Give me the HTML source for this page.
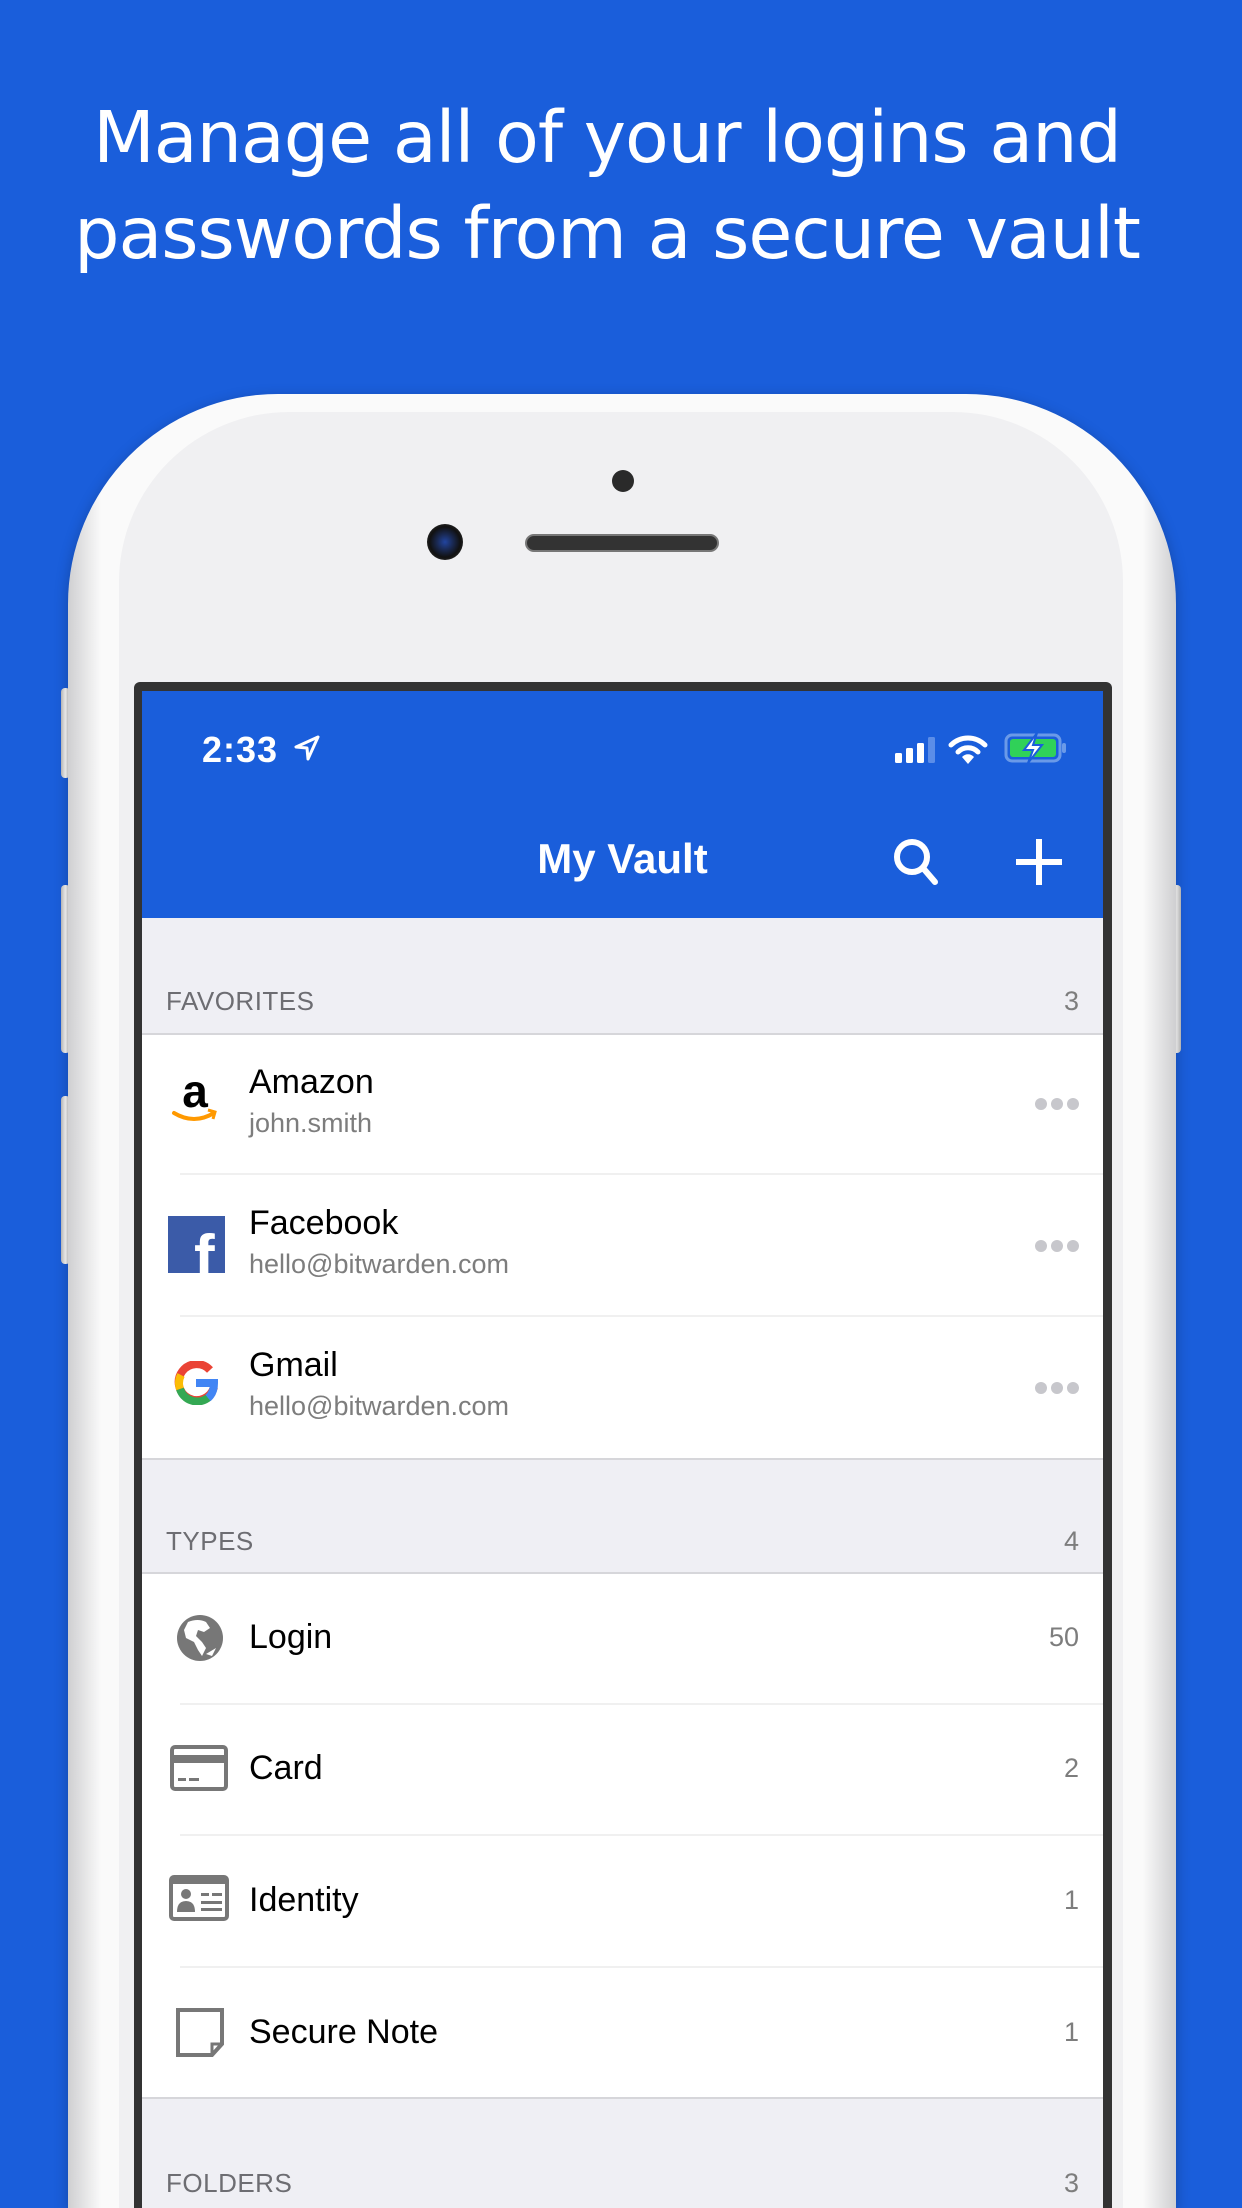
<!DOCTYPE html>
<html><head><meta charset="utf-8"><style>
*{margin:0;padding:0;box-sizing:border-box}
html,body{width:1242px;height:2208px;overflow:hidden}
body{background:#1a5edb;font-family:"Liberation Sans",sans-serif}
#wrap{position:relative;width:1242px;height:2208px;overflow:hidden;background:#1a5edb}
.abs{position:absolute}
.head{left:-14px;width:1242px;text-align:center;color:#fff;font-family:"DejaVu Sans","Liberation Sans",sans-serif;font-size:71.5px;letter-spacing:-1px;line-height:96px;top:90px}
.phone{left:68px;top:394px;width:1108px;height:1814px;border-radius:210px 210px 0 0;background:linear-gradient(90deg,#cfcfd1 0,#fafafa 3%,#fafafa 97%,#cfcfd1 100%);box-shadow:0 4px 14px rgba(0,0,0,.25)}
.face{left:119px;top:412px;width:1004px;height:1796px;border-radius:170px 170px 0 0;background:#f0f0f2}
.btn{background:linear-gradient(90deg,#bbb,#fff,#bbb);border-radius:4px;width:9px}
.screen{left:134px;top:682px;width:978px;height:1526px;background:#333;border-radius:6px 6px 0 0}
.sc{left:142px;top:691px;width:961px;height:1517px;background:#fff;overflow:hidden}
.nav{left:0;top:0;width:961px;height:227px;background:#1a5edb}
.t{color:#000;font-size:34px}
.s{color:#7d7d7d;font-size:27px}
.hdr{color:#6d6d72;font-size:26px;letter-spacing:.5px}
.gray{background:#efeff4;left:0;width:961px}
.line{left:0;width:961px;height:2px;background:#d6d6da}
.sep{left:38px;width:923px;height:2px;background:#f0f0f0}
.dots{left:893px;width:50px;height:12px;display:flex;gap:4px}
.dots i{display:block;width:12px;height:12px;border-radius:6px;background:#c7c7cc}
.cnt{color:#7d7d7d;font-size:27px;right:24px;text-align:right}
</style></head><body><div id="wrap">
<div class="abs head">Manage all of your logins and<br>passwords from a secure vault</div>
<div class="abs btn" style="left:61px;top:688px;height:90px"></div>
<div class="abs btn" style="left:61px;top:885px;height:168px"></div>
<div class="abs btn" style="left:61px;top:1096px;height:168px"></div>
<div class="abs btn" style="left:1172px;top:885px;height:168px"></div>
<div class="abs phone"></div>
<div class="abs face"></div>
<div class="abs" style="left:612px;top:470px;width:22px;height:22px;border-radius:50%;background:#2a2a2a"></div>
<div class="abs" style="left:427px;top:524px;width:36px;height:36px;border-radius:50%;background:radial-gradient(circle,#2245a0 0,#1a2a55 30%,#111 60%,#444 100%)"></div>
<div class="abs" style="left:525px;top:534px;width:194px;height:18px;border-radius:9px;background:#333;border:2px solid #777"></div>
<div class="abs screen"></div>
<div class="abs sc">
 <div class="abs nav">
  <div class="abs" style="left:60px;top:38px;color:#fff;font-size:36px;font-weight:bold;letter-spacing:1px">2:33</div>
  <svg class="abs" style="left:152px;top:44px" width="26" height="26" viewBox="0 0 26 26"><path d="M24 2 L2 12 L13 13 L14 24 Z" fill="none" stroke="#fff" stroke-width="3" stroke-linejoin="round"/></svg>
  <svg class="abs" style="left:752px;top:46px" width="44" height="26"><rect x="1" y="16" width="7" height="10" rx="1.5" fill="#fff"/><rect x="12" y="11" width="7" height="15" rx="1.5" fill="#fff"/><rect x="23" y="6" width="7" height="20" rx="1.5" fill="#fff"/><rect x="34" y="0" width="7" height="26" rx="1.5" fill="#5b8de8"/></svg>
  <svg class="abs" style="left:806px;top:42px" width="40" height="32" viewBox="0 0 40 32"><path d="M3 12 A24 24 0 0 1 37 12" fill="none" stroke="#fff" stroke-width="5" stroke-linecap="round"/><path d="M10 19 A14 14 0 0 1 30 19" fill="none" stroke="#fff" stroke-width="5" stroke-linecap="round"/><path d="M20 31 L14 24 A8 8 0 0 1 26 24 Z" fill="#fff"/></svg>
  <svg class="abs" style="left:862px;top:42px" width="64" height="30"><rect x="2" y="2" width="54" height="26" rx="6" fill="none" stroke="#6a9ae8" stroke-width="3"/><rect x="6" y="6" width="46" height="18" rx="3" fill="#30d158"/><rect x="58" y="10" width="4" height="10" rx="2" fill="#6a9ae8"/><path d="M33 0 L20 17 L29 17 L24 30 L38 12 L29 12 Z" fill="#fff" stroke="#1a5edb" stroke-width="2"/></svg>
  <div class="abs" style="left:0;width:961px;text-align:center;top:144px;color:#fff;font-size:42px;font-weight:bold">My Vault</div>
  <svg class="abs" style="left:750px;top:146px" width="50" height="52"><circle cx="20" cy="20" r="15" fill="none" stroke="#fff" stroke-width="6"/><line x1="31" y1="31" x2="43" y2="45" stroke="#fff" stroke-width="6" stroke-linecap="round"/></svg>
  <svg class="abs" style="left:872px;top:146px" width="50" height="50"><line x1="25" y1="2" x2="25" y2="48" stroke="#fff" stroke-width="6"/><line x1="2" y1="25" x2="48" y2="25" stroke="#fff" stroke-width="6"/></svg>
 </div>
 <div class="abs gray" style="top:227px;height:116px"></div>
 <div class="abs hdr" style="left:24px;top:295px">FAVORITES</div>
 <div class="abs cnt" style="top:295px">3</div>
 <div class="abs line" style="top:342px"></div>

 <svg class="abs" style="left:28px;top:382px" width="50" height="56" viewBox="0 0 50 56"><text x="25" y="34" text-anchor="middle" font-family="Liberation Sans" font-weight="bold" font-size="46" fill="#000">a</text><path d="M4 40 Q24 52 44 40" fill="none" stroke="#f90" stroke-width="4" stroke-linecap="round"/><path d="M38 37 L45 39 L43 46" fill="none" stroke="#f90" stroke-width="3"/></svg>
 <div class="abs t" style="left:107px;top:372px">Amazon</div>
 <div class="abs s" style="left:107px;top:417px">john.smith</div>
 <div class="abs dots" style="top:407px"><i></i><i></i><i></i></div>
 <div class="abs sep" style="top:482px"></div>

 <div class="abs" style="left:26px;top:525px;width:57px;height:57px;background:#3b5ba8;overflow:hidden"><div class="abs" style="left:26px;top:6px;color:#fff;font-size:62px;font-weight:bold;font-family:'Liberation Sans'">f</div></div>
 <div class="abs t" style="left:107px;top:513px">Facebook</div>
 <div class="abs s" style="left:107px;top:558px">hello@bitwarden.com</div>
 <div class="abs dots" style="top:549px"><i></i><i></i><i></i></div>
 <div class="abs sep" style="top:624px"></div>

 <svg class="abs" style="left:32px;top:670px" width="44" height="44" viewBox="0 0 44 44"><path d="M36 9 A18 18 0 1 0 40 26" fill="none" stroke="#ea4335" stroke-width="8"/><path d="M7 14 A18 18 0 0 0 6 28" fill="none" stroke="#fbbc05" stroke-width="8"/><path d="M6 28 A18 18 0 0 0 35 36" fill="none" stroke="#34a853" stroke-width="8"/><path d="M22 22 L40 22 Q40 32 34 37" fill="none" stroke="#4285f4" stroke-width="8"/></svg>
 <div class="abs t" style="left:107px;top:655px">Gmail</div>
 <div class="abs s" style="left:107px;top:700px">hello@bitwarden.com</div>
 <div class="abs dots" style="top:691px"><i></i><i></i><i></i></div>
 <div class="abs line" style="top:767px"></div>

 <div class="abs gray" style="top:769px;height:113px"></div>
 <div class="abs hdr" style="left:24px;top:835px">TYPES</div>
 <div class="abs cnt" style="top:835px">4</div>
 <div class="abs line" style="top:881px"></div>

 <svg class="abs" style="left:34px;top:923px" width="48" height="48" viewBox="0 0 48 48"><circle cx="24" cy="24" r="23" fill="#777"/><path d="M12 8 Q22 4 30 8 L34 14 L28 18 L22 16 L20 22 L26 28 L30 34 L26 42 L22 36 L18 28 L10 24 L8 16 Z" fill="#fff"/><path d="M30 40 L40 34 L36 42 Z" fill="#fff"/></svg>
 <div class="abs t" style="left:107px;top:927px">Login</div>
 <div class="abs cnt" style="top:931px">50</div>
 <div class="abs sep" style="top:1012px"></div>

 <svg class="abs" style="left:27px;top:1053px" width="60" height="50"><rect x="3" y="3" width="54" height="42" rx="3" fill="none" stroke="#777" stroke-width="4"/><rect x="3" y="11" width="54" height="8" fill="#777"/><rect x="9" y="34" width="8" height="3" fill="#777"/><rect x="20" y="34" width="10" height="3" fill="#777"/></svg>
 <div class="abs t" style="left:107px;top:1058px">Card</div>
 <div class="abs cnt" style="top:1062px">2</div>
 <div class="abs sep" style="top:1143px"></div>

 <svg class="abs" style="left:26px;top:1183px" width="62" height="50"><rect x="3" y="3" width="56" height="42" rx="3" fill="none" stroke="#777" stroke-width="4"/><rect x="3" y="3" width="56" height="7" fill="#777"/><circle cx="18" cy="20" r="5" fill="#777"/><path d="M9 38 Q9 27 18 27 Q27 27 27 38 Z" fill="#777"/><rect x="33" y="19" width="8" height="3" fill="#777"/><rect x="44" y="19" width="10" height="3" fill="#777"/><rect x="33" y="27" width="21" height="3" fill="#777"/><rect x="33" y="34" width="21" height="3" fill="#777"/></svg>
 <div class="abs t" style="left:107px;top:1190px">Identity</div>
 <div class="abs cnt" style="top:1194px">1</div>
 <div class="abs sep" style="top:1275px"></div>

 <svg class="abs" style="left:34px;top:1317px" width="48" height="50"><path d="M2 2 L46 2 L46 36 L36 47 L2 47 Z" fill="none" stroke="#777" stroke-width="4"/><path d="M46 36 L36 36 L36 47" fill="none" stroke="#777" stroke-width="3"/></svg>
 <div class="abs t" style="left:107px;top:1322px">Secure Note</div>
 <div class="abs cnt" style="top:1326px">1</div>
 <div class="abs line" style="top:1406px"></div>
 <div class="abs gray" style="top:1408px;height:109px"></div>
 <div class="abs hdr" style="left:24px;top:1477px">FOLDERS</div>
 <div class="abs cnt" style="top:1477px">3</div>
</div>
</div></body></html>
